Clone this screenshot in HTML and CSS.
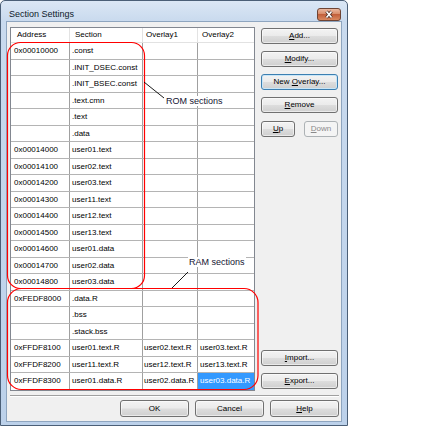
FILE: index.html
```html
<!DOCTYPE html>
<html>
<head>
<meta charset="utf-8">
<link rel="stylesheet" href="styles.css">
</head>
<body>
<div class="page">
  <div class="window">
    <div class="titlebar">
      <span class="title">Section Settings</span>
      <svg class="close" width="24" height="13" viewBox="0 0 24 13">
        <defs>
          <linearGradient id="cg" x1="0" y1="0" x2="0" y2="1">
            <stop offset="0" stop-color="#ecbda6"/>
            <stop offset="0.45" stop-color="#d98c69"/>
            <stop offset="0.5" stop-color="#c2603b"/>
            <stop offset="1" stop-color="#dc8c62"/>
          </linearGradient>
        </defs>
        <rect x="0.5" y="0.5" width="23" height="12" rx="2.5" fill="url(#cg)" stroke="#6e4434"/>
        <path d="M9.5 3.5 L14.5 9.5 M14.5 3.5 L9.5 9.5" stroke="#4a2e26" stroke-width="3.2"/>
        <path d="M9.5 3.5 L14.5 9.5 M14.5 3.5 L9.5 9.5" stroke="#ffffff" stroke-width="1.6"/>
      </svg>
    </div>
    <div class="client">
      <div class="main">
        <div class="list">
          <div class="hdr">
            <div class="hc c1">Address</div>
            <div class="hc c2">Section</div>
            <div class="hc c3">Overlay1</div>
            <div class="hc c4">Overlay2</div>
          </div>
          <div class="row"><div class="c c1">0x00010000</div><div class="c c2">.const</div><div class="c c3"></div><div class="c c4"></div></div>
          <div class="row"><div class="c c1"></div><div class="c c2">.INIT_DSEC.const</div><div class="c c3"></div><div class="c c4"></div></div>
          <div class="row"><div class="c c1"></div><div class="c c2">.INIT_BSEC.const</div><div class="c c3"></div><div class="c c4"></div></div>
          <div class="row"><div class="c c1"></div><div class="c c2">.text.cmn</div><div class="c c3"></div><div class="c c4"></div></div>
          <div class="row"><div class="c c1"></div><div class="c c2">.text</div><div class="c c3"></div><div class="c c4"></div></div>
          <div class="row"><div class="c c1"></div><div class="c c2">.data</div><div class="c c3"></div><div class="c c4"></div></div>
          <div class="row"><div class="c c1">0x00014000</div><div class="c c2">user01.text</div><div class="c c3"></div><div class="c c4"></div></div>
          <div class="row"><div class="c c1">0x00014100</div><div class="c c2">user02.text</div><div class="c c3"></div><div class="c c4"></div></div>
          <div class="row"><div class="c c1">0x00014200</div><div class="c c2">user03.text</div><div class="c c3"></div><div class="c c4"></div></div>
          <div class="row"><div class="c c1">0x00014300</div><div class="c c2">user11.text</div><div class="c c3"></div><div class="c c4"></div></div>
          <div class="row"><div class="c c1">0x00014400</div><div class="c c2">user12.text</div><div class="c c3"></div><div class="c c4"></div></div>
          <div class="row"><div class="c c1">0x00014500</div><div class="c c2">user13.text</div><div class="c c3"></div><div class="c c4"></div></div>
          <div class="row"><div class="c c1">0x00014600</div><div class="c c2">user01.data</div><div class="c c3"></div><div class="c c4"></div></div>
          <div class="row"><div class="c c1">0x00014700</div><div class="c c2">user02.data</div><div class="c c3"></div><div class="c c4"></div></div>
          <div class="row"><div class="c c1">0x00014800</div><div class="c c2">user03.data</div><div class="c c3"></div><div class="c c4"></div></div>
          <div class="row"><div class="c c1">0xFEDF8000</div><div class="c c2">.data.R</div><div class="c c3"></div><div class="c c4"></div></div>
          <div class="row"><div class="c c1"></div><div class="c c2">.bss</div><div class="c c3"></div><div class="c c4"></div></div>
          <div class="row"><div class="c c1"></div><div class="c c2">.stack.bss</div><div class="c c3"></div><div class="c c4"></div></div>
          <div class="row"><div class="c c1">0xFFDF8100</div><div class="c c2">user01.text.R</div><div class="c c3">user02.text.R</div><div class="c c4">user03.text.R</div></div>
          <div class="row"><div class="c c1">0xFFDF8200</div><div class="c c2">user11.text.R</div><div class="c c3">user12.text.R</div><div class="c c4">user13.text.R</div></div>
          <div class="row last"><div class="c c1">0xFFDF8300</div><div class="c c2">user01.data.R</div><div class="c c3">user02.data.R</div><div class="c c4 sel">user03.data.R</div></div>
        </div>
        <div class="side">
          <div class="btn"><u>A</u>dd...</div>
          <div class="btn"><u>M</u>odify...</div>
          <div class="btn focus">New <u>O</u>verlay...</div>
          <div class="btn"><u>R</u>emove</div>
          <div class="pair">
            <div class="btn small"><u>U</u>p</div>
            <div class="btn small disabled"><u>D</u>own</div>
          </div>
          <div class="btn push"><u>I</u>mport...</div>
          <div class="btn"><u>E</u>xport...</div>
        </div>
      </div>
      <div class="sep"></div>
      <div class="footer">
        <div class="btn wide">OK</div>
        <div class="btn wide">Cancel</div>
        <div class="btn wide"><u>H</u>elp</div>
      </div>
    </div>
  </div>

  <svg class="annot" width="434" height="429" viewBox="0 0 434 429">
    <rect x="7.5" y="42.5" width="137" height="246" rx="13" fill="none" stroke="#ff0000" stroke-width="1.2"/>
    <rect x="7.5" y="288.5" width="250.5" height="101" rx="14" fill="none" stroke="#ff0000" stroke-width="1.2"/>
    <line x1="144" y1="82" x2="164" y2="98" stroke="#000" stroke-width="0.9"/>
    <line x1="188" y1="272" x2="172" y2="288" stroke="#000" stroke-width="0.9"/>
  </svg>
  <div class="label rom">ROM sections</div>
  <div class="label ram">RAM sections</div>
</div>
</body>
</html>
```

FILE: styles.css
```css
body {
  margin: 0;
  background: #ffffff;
  font-family: "Liberation Sans", Arial, sans-serif;
  color: #000;
}

.page {
  position: relative;
  width: 434px;
  height: 429px;
}

.window {
  width: 348px;
  height: 426px;
  box-sizing: border-box;
  border: 1px solid #4b5f77;
  border-radius: 5px 5px 0 0;
  background: linear-gradient(to bottom, #dbe7f5 0px, #c9daee 20px, #bcd1ea 100%);
  padding: 0 5px 3px 5px;
  display: flex;
  flex-direction: column;
}

.titlebar {
  height: 20px;
  box-sizing: border-box;
  padding: 7px 1px 0 3px;
  display: flex;
  justify-content: space-between;
  align-items: flex-start;
}

.title {
  font-size: 9px;
  line-height: 12px;
  color: #0f1a2a;
}

.close {
  display: block;
  margin-top: 0;
}

.client {
  flex: 1;
  background: #f0f0f0;
  border: 1px solid #8ea5bf;
  display: flex;
  flex-direction: column;
  padding: 5px 2px 0 3px;
}

.main {
  display: grid;
  grid-template-columns: 245px 77px;
  column-gap: 6px;
  height: 363.5px;
}

.list {
  box-sizing: border-box;
  border: 1px solid #828790;
  background: #ffffff;
  font-size: 8px;
}

.hdr {
  display: grid;
  grid-template-columns: 59px 73px 55px 1fr;
  height: 15px;
  box-sizing: border-box;
  border-bottom: 1px solid #e2e2e2;
}

.hc {
  line-height: 14px;
  border-right: 1px solid #e3e3e3;
  white-space: nowrap;
  overflow: hidden;
}

.hc.c1 { padding-left: 6px; }
.hc.c2 { padding-left: 5px; }
.hc.c3 { padding-left: 3px; }
.hc.c4 { padding-left: 4px; border-right: none; }

.row {
  display: grid;
  grid-template-columns: 59px 73px 55px 1fr;
  height: 16.5px;
  box-sizing: border-box;
  border-bottom: 1px solid #b4b4b4;
}

.row.last {
  border-bottom: none;
}

.c {
  border-right: 1px solid #a0a0a0;
  line-height: 15.5px;
  white-space: nowrap;
  overflow: hidden;
}

.c.c1 { padding-left: 3px; }
.c.c2 { padding-left: 2px; }
.c.c3 { padding-left: 1px; }
.c.c4 { padding-left: 2px; border-right: none; }

.c.sel {
  background: #3399ff;
  color: #ffffff;
}

.side {
  display: flex;
  flex-direction: column;
  padding-top: 1px;
  padding-bottom: 1.5px;
  gap: 7px;
}

.pair {
  display: flex;
  justify-content: space-between;
  margin-top: 1px;
}

.btn {
  height: 16px;
  box-sizing: border-box;
  border: 1px solid #707070;
  border-radius: 3px;
  background: linear-gradient(to bottom, #f3f3f3 0%, #ebebeb 48%, #dddddd 52%, #cfcfcf 100%);
  box-shadow: inset 0 0 0 1px rgba(255, 255, 255, 0.55);
  font-size: 8px;
  line-height: 14px;
  text-align: center;
  white-space: nowrap;
  color: #000;
}

.btn u {
  text-decoration: underline;
  text-underline-offset: 1px;
}

.btn.small {
  width: 34px;
}

.btn.focus {
  border-color: #3c7fb1;
  box-shadow: inset 0 0 0 1px #c8e6f8;
}

.btn.disabled {
  border-color: #adb2b5;
  background: #f4f4f4;
  box-shadow: none;
  color: #8a8a8a;
}

.btn.push {
  margin-top: auto;
}

.sep {
  margin-top: 4px;
  width: 329px;
  border-top: 1px solid #a0a0a0;
  border-bottom: 1px solid #ffffff;
}

.footer {
  display: flex;
  justify-content: flex-end;
  gap: 6px;
  margin-top: 3.5px;
}

.btn.wide {
  width: 69px;
  height: 17px;
  line-height: 15px;
}

.annot {
  position: absolute;
  left: 0;
  top: 0;
  pointer-events: none;
}

.label {
  position: absolute;
  font-size: 9px;
  line-height: 10px;
  color: #141432;
  background: #ffffff;
  padding: 0 1px;
  white-space: nowrap;
}

.label.rom {
  left: 165px;
  top: 96px;
}

.label.ram {
  left: 188px;
  top: 257px;
}
```
